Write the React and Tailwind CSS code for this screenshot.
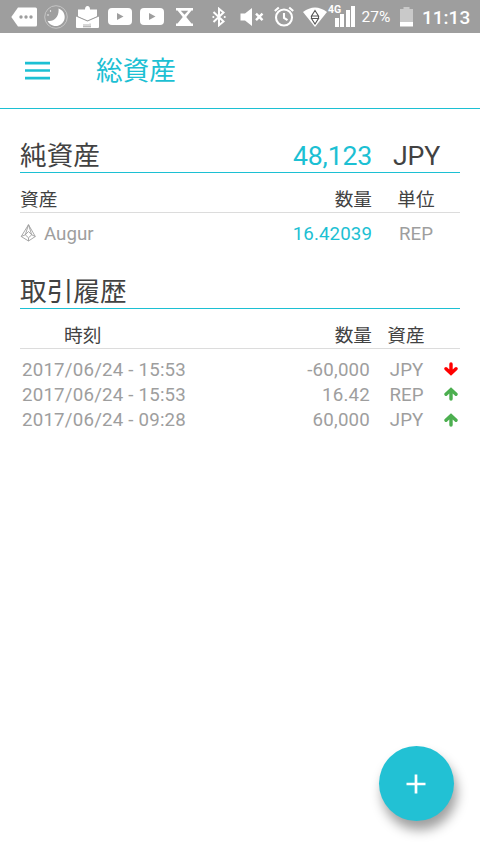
const assets = [{ name: 'Augur', amount: '16.42039', unit: 'REP' }]

const history = [
  { time: '2017/06/24 - 15:53', amount: '-60,000', unit: 'JPY', up: false },
  { time: '2017/06/24 - 15:53', amount: '16.42', unit: 'REP', up: true },
  { time: '2017/06/24 - 09:28', amount: '60,000', unit: 'JPY', up: true },
]

function PlayIcon({ className }) {
  return (
    <svg className={className} width="24" height="17" viewBox="0 0 24 17">
      <rect width="24" height="17" rx="4" fill="#fff" />
      <path d="M9 5v7l6.500-3.500z" fill="#9e9e9e" />
    </svg>
  )
}

function StatusBar() {
  return (
    <div className="flex h-[33px] items-center bg-[#9e9e9e] pl-[11px] text-white">
      {/* Notifications */}
      <svg width="26" height="20" viewBox="0 0 26 20">
        <path d="M7 .5h17.500q1.500 0 1.500 1.500v16q0 1.500-1.500 1.500H7L.3 10z" fill="#fff" />
        <g fill="#9e9e9e">
          <circle cx="10" cy="10" r="1.700" />
          <circle cx="15" cy="10" r="1.700" />
          <circle cx="20" cy="10" r="1.700" />
        </g>
      </svg>
      <svg className="ml-[7px]" width="24" height="24" viewBox="0 0 24 24">
        <circle cx="12" cy="12" r="11.300" fill="none" stroke="#c4c4c4" />
        <path d="M14.500 3.500A9 9 0 1 1 3.500 15.800C9.500 17.500 15.500 12 14.500 3.500z" fill="#fff" />
        <circle cx="6.500" cy="6" r=".7" fill="#fff" />
        <circle cx="4" cy="10" r=".7" fill="#fff" />
      </svg>
      <svg className="ml-2" width="23" height="24" viewBox="0 0 23 24">
        <path d="M2 4.500h7q0-3.500 2.500-3.500T14 4.500h7v7l-9.500 4.500L2 11.500z" fill="#fff" />
        <path d="M0 11l11.500 5L23 11v11q0 1-1 1H1q-1 0-1-1z" fill="#fff" />
        <path d="M0 11l11.500 5L23 11" fill="none" stroke="#9e9e9e" strokeWidth="1.100" />
        <path d="M8 19v3M10 19v3M12 19v3M14 18.500V22M7 21.800h8" fill="none" stroke="#b0b0b0" strokeWidth="1" />
      </svg>
      <PlayIcon className="ml-[9px]" />
      <PlayIcon className="ml-2" />
      <svg className="ml-3" width="17" height="18" viewBox="0 0 17 18">
        <path d="M0 0h17v2.500h-1.500L10.200 9l5.300 6.500H17V18H0v-2.500h1.500L6.800 9 1.500 2.500H0z" fill="#fff" />
        <path d="M4.800 2.800h7.400L8.500 6.800z" fill="#9e9e9e" />
      </svg>

      {/* System */}
      <svg className="ml-[19px]" width="14" height="20" viewBox="0 0 14 20" fill="none" stroke="#fff" strokeWidth="2">
        <path d="M1.500 5l10 9.500L7 18.200V1.800l4.500 3.700-10 9.500" />
        <path d="M1.300 10h.1M12.700 10h.1" strokeLinecap="round" />
      </svg>
      <svg className="ml-[14px]" width="24" height="18" viewBox="0 0 24 18">
        <path d="M.5 5.500H5L12 0v18l-7-5.500H.5z" fill="#fff" />
        <path d="M16 5.700l6.500 6.500M22.500 5.700L16 12.200" stroke="#fff" strokeWidth="2.400" />
      </svg>
      <svg className="ml-2.5" width="20" height="21" viewBox="0 0 20 21" fill="none" stroke="#fff" strokeWidth="2.100">
        <circle cx="10" cy="11.500" r="8" />
        <path d="M10 7v5l3.500 2.200M.8 5l4-3.500M19.200 5l-4-3.500" />
      </svg>
      <svg className="ml-[9px]" width="24" height="20" viewBox="0 0 24 20">
        <path d="M0 5Q12-4 24 5L12 20z" fill="#fff" />
        <g fill="none" stroke="#555" strokeWidth="1.100">
          <path d="M12 3.500l3.500 5.500H8.500zM8.500 11.500h7L12 17zM8.500 9v2.500M15.500 9v2.500" />
        </g>
      </svg>
      <div className="relative ml-[8px] flex h-[21px] w-[20px] items-end gap-[1.500px]">
        <span className="absolute -left-[7px] -top-[2px] text-[10.500px] font-bold leading-[12px]">4G</span>
        <span className="h-[9px] w-[4px] bg-white" />
        <span className="h-[13px] w-[4px] bg-white" />
        <span className="h-[17px] w-[4px] bg-white" />
        <span className="h-[21px] w-[4px] bg-white" />
      </div>
      <span className="relative top-px ml-[6.500px] w-[30px] whitespace-nowrap text-[15.500px] leading-none">27%</span>
      <svg className="ml-[8.500px]" width="13" height="20" viewBox="0 0 13 20">
        <path d="M0 2h3.500V0h6v2H13v13H0z" fill="#c9c9c9" />
        <path d="M0 15h13v4.500H0z" fill="#fff" />
      </svg>
      <span className="relative top-px ml-[9px] text-[19px] font-medium leading-none">11:13</span>
    </div>
  )
}

function AugurIcon() {
  return (
    <svg className="mb-[2px]" width="16" height="18" viewBox="0 0 16 18" fill="none" stroke="#9e9e9e" strokeWidth=".9" strokeLinejoin="round">
      <path d="M8.500 .7L15.300 12.500 8.500 17 1.200 12.500z" />
      <path d="M8.500 7.500l3.200 3.300-3.200 3-3.200-3zM1.200 12.500l4.100-1.700M15.300 12.500l-3.600-1.700M8.500 13.800V17M8.500 .7L5.300 10.800M8.500 .7l3.200 10.100" />
    </svg>
  )
}

function Arrow({ up }) {
  return (
    <svg
      className={up ? 'text-[#4caf50]' : 'text-[#ff0000]'}
      width="14"
      height="14"
      viewBox="0 0 14 14"
      fill="none"
      stroke="currentColor"
      strokeWidth="3.400"
      strokeLinecap="round"
    >
      <path d={up ? 'M7 12V3M2 7.300L7 2.500l5 4.800' : 'M7 2V11M2 6.700L7 11.500l5-4.800'} />
    </svg>
  )
}

export default function App() {
  return (
    <div className="relative flex h-[853px] w-[480px] flex-col overflow-hidden bg-white font-[Roboto,'Noto_Sans_CJK_JP',sans-serif] text-[18.700px] text-[#424242]">
      <StatusBar />

      <header className="flex h-[76px] items-center border-b border-[#1cc0d3] pl-[25px] text-[#1cc0d3]">
        <svg className="mb-px" width="25" height="19" viewBox="0 0 25 19" fill="#1cc0d3">
          <path d="M0 .7h25v2.700H0zM0 8.200h25v2.600H0zM0 15.700h25v2.700H0z" />
        </svg>
        <h1 className="ml-[46px] pt-px text-[26.670px] leading-none">総資産</h1>
      </header>

      <main className="px-5 pt-7">
        <section>
          <div className="flex h-9 items-center border-b border-[#1cc0d3] pt-[3px] text-[26.670px] leading-none">
            <h2 className="flex-1">純資産</h2>
            <span className="tracking-[-0.2px] text-[#1cc0d3]">48,123</span>
            <span className="w-[88px] pl-px text-center tracking-[-0.2px]">JPY</span>
          </div>
          <div className="flex h-10 items-center border-b border-[#dcdcdc] pt-4 leading-none">
            <span className="flex-1">資産</span>
            <span>数量</span>
            <span className="w-[88px] text-center">単位</span>
          </div>
          {assets.map((asset) => (
            <div key={asset.name} className="flex h-10 items-center pt-[2px] leading-none text-[#9e9e9e]">
              <AugurIcon />
              <span className="ml-2 flex-1">{asset.name}</span>
              <span className="tracking-[0.1px] text-[#1cc0d3]">{asset.amount}</span>
              <span className="w-[88px] text-center">{asset.unit}</span>
            </div>
          ))}
        </section>

        <section className="mt-5">
          <h2 className="flex h-9 items-center border-b border-[#1cc0d3] pt-[3px] text-[26.670px] leading-none">取引履歴</h2>
          <div className="flex h-10 items-center border-b border-[#dcdcdc] pt-4 leading-none">
            <span className="flex-1 pl-11">時刻</span>
            <span>数量</span>
            <span className="w-[68px] text-center">資産</span>
            <span className="w-5" />
          </div>
          <div className="pt-[8.500px]">
            {history.map((item, index) => (
              <div key={index} className="flex h-[25.330px] items-center leading-none text-[#9e9e9e]">
                <span className="flex-1 pl-0.5 tracking-[0.200px]">{item.time}</span>
                <span className="pr-0.5 tracking-[0.200px]">{item.amount}</span>
                <span className="w-[68px] pl-px text-center">{item.unit}</span>
                <span className="flex w-5 justify-center pb-[2px] pl-px">
                  <Arrow up={item.up} />
                </span>
              </div>
            ))}
          </div>
        </section>
      </main>

      <button className="absolute left-[378.500px] top-[746px] flex size-[75px] items-center justify-center rounded-full bg-[#22c1d4] shadow-[3px_9px_12px_rgba(0,0,0,0.38)]">
        <svg width="20" height="20" viewBox="0 0 20 20" stroke="#fff" strokeWidth="2.700">
          <path d="M10 .5v19M.5 10h19" />
        </svg>
      </button>
    </div>
  )
}
